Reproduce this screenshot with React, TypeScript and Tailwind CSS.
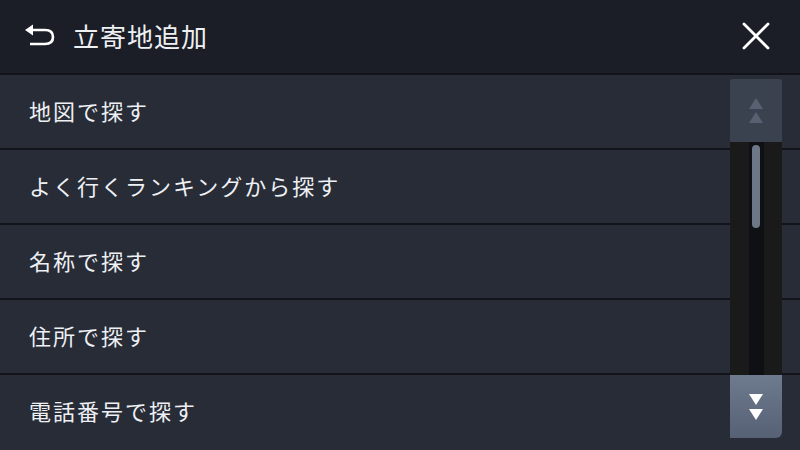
const items = [
  "地図で探す",
  "よく行くランキングから探す",
  "名称で探す",
  "住所で探す",
  "電話番号で探す",
];

export default function App() {
  return (
    <div
      className="relative w-[800px] h-[450px] overflow-hidden bg-[#272c37] text-[#eef0f3]"
      style={{ fontFamily: '"Noto Sans CJK JP", "Noto Sans", sans-serif' }}
    >
      {/* Header */}
      <div className="flex items-center h-[73px] bg-[#1b1e26] pl-[24px] pr-[30px] pb-[2px]">
        <svg width="34" height="24" viewBox="0 0 34 24" className="mr-[15px]">
          <path d="M4 6 L21 6 Q29 6 29 13 Q29 20 21 20 L6 20" fill="none" stroke="#fff" strokeWidth="2.6" />
          <path d="M1 6 L9 0.5 L9 11.5 Z" fill="#fff" />
        </svg>
        <span className="text-[26px] tracking-[1px]">立寄地追加</span>
        <div className="flex-1" />
        <svg width="28" height="28" viewBox="0 0 28 28">
          <path d="M2 2 L26 26 M26 2 L2 26" stroke="#fff" strokeWidth="2.8" strokeLinecap="round" />
        </svg>
      </div>

      {/* List */}
      <div className="flex flex-col">
        {items.map((t) => (
          <div
            key={t}
            className="flex items-center h-[75px] border-t-2 border-[#121419] pl-[29px] pb-[3px] text-[22px] tracking-[2px]"
          >
            {t}
          </div>
        ))}
      </div>

      {/* Scrollbar */}
      <div className="absolute left-[730px] top-[79px] w-[52px] h-[359px] flex flex-col">
        <div className="h-[63px] bg-[#3b424f] rounded-t-[3px] flex flex-col items-center justify-center gap-[3px]">
          <svg width="14" height="11" viewBox="0 0 14 11">
            <path d="M7 0 L14 11 L0 11 Z" fill="#576172" />
          </svg>
          <svg width="14" height="11" viewBox="0 0 14 11">
            <path d="M7 0 L14 11 L0 11 Z" fill="#576172" />
          </svg>
        </div>
        <div className="flex-1 bg-[#1a1a1b] flex justify-center">
          <div className="w-[15px] bg-[#0e1013] flex justify-center pt-[3px]">
            <div className="w-[8px] h-[83px] rounded-full bg-[#6c7787]" />
          </div>
        </div>
        <div className="h-[63px] bg-gradient-to-b from-[#6e7a8d] to-[#566176] rounded-br-[6px] flex flex-col items-center justify-center gap-[4px]">
          <svg width="14" height="11" viewBox="0 0 14 11">
            <path d="M0 0 L14 0 L7 11 Z" fill="#fff" />
          </svg>
          <svg width="14" height="11" viewBox="0 0 14 11">
            <path d="M0 0 L14 0 L7 11 Z" fill="#fff" />
          </svg>
        </div>
      </div>
    </div>
  );
}
